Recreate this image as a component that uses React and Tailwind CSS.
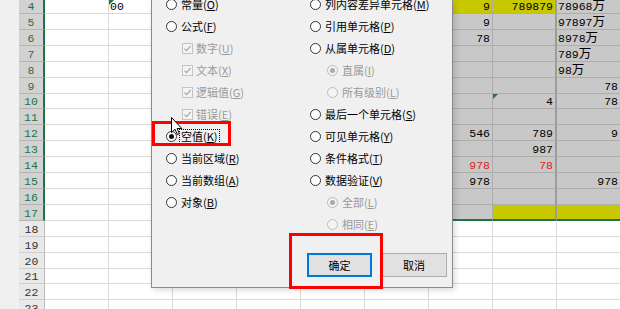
import React from 'react';

// visible rows of the sheet, top of row 4 is cut by the window
const rows = [
  { n: 4, h: 'h-[14px]' },
  { n: 5, h: 'h-[16px]' },
  { n: 6, h: 'h-[16px]' },
  { n: 7, h: 'h-[16px]' },
  { n: 8, h: 'h-[16px]' },
  { n: 9, h: 'h-[16px]' },
  { n: 10, h: 'h-[15px]' },
  { n: 11, h: 'h-[16px]' },
  { n: 12, h: 'h-[16px]' },
  { n: 13, h: 'h-[16px]' },
  { n: 14, h: 'h-[16px]' },
  { n: 15, h: 'h-[16px]' },
  { n: 16, h: 'h-[16px]' },
  { n: 17, h: 'h-[16px]' },
  { n: 18, h: 'h-[16px]' },
  { n: 19, h: 'h-[16px]' },
  { n: 20, h: 'h-[16px]' },
  { n: 21, h: 'h-[15px]' },
  { n: 22, h: 'h-[16px]' },
  { n: 23, h: 'h-[16px]' },
];

const cols = ['a', 'b', 'c', 'd', 'e', 'f', 'g', 'h', 'i'];

const cellData = {
  4: { b: { t: '00', left: true, tri: true }, g: { t: '9' }, h: { t: '789879' }, i: { t: '78968', wan: true, left: true } },
  5: { g: { t: '9' }, i: { t: '97897', wan: true, left: true } },
  6: { g: { t: '78' }, i: { t: '8978', wan: true, left: true } },
  7: { i: { t: '789', wan: true, left: true } },
  8: { i: { t: '98', wan: true, left: true } },
  9: { i: { t: '78' } },
  10: { h: { t: '4', tri: true }, i: { t: '78' } },
  12: { g: { t: '546' }, h: { t: '789' }, i: { t: '9' } },
  13: { h: { t: '987' } },
  14: { g: { t: '978', red: true }, h: { t: '78', red: true } },
  15: { g: { t: '978' }, i: { t: '978' } },
};

const leftItems = [
  { type: 'radio', label: '常量', key: 'O' },
  { type: 'radio', label: '公式', key: 'F' },
  { type: 'check', label: '数字', key: 'U' },
  { type: 'check', label: '文本', key: 'X' },
  { type: 'check', label: '逻辑值', key: 'G' },
  { type: 'check', label: '错误', key: 'E' },
  { type: 'radio', label: '空值', key: 'K', checked: true, focus: true },
  { type: 'radio', label: '当前区域', key: 'R' },
  { type: 'radio', label: '当前数组', key: 'A' },
  { type: 'radio', label: '对象', key: 'B' },
];

const rightItems = [
  { type: 'radio', label: '列内容差异单元格', key: 'M' },
  { type: 'radio', label: '引用单元格', key: 'P' },
  { type: 'radio', label: '从属单元格', key: 'D' },
  { type: 'sub', label: '直属', key: 'I', checked: true },
  { type: 'sub', label: '所有级别', key: 'L' },
  { type: 'radio', label: '最后一个单元格', key: 'S' },
  { type: 'radio', label: '可见单元格', key: 'Y' },
  { type: 'radio', label: '条件格式', key: 'T' },
  { type: 'radio', label: '数据验证', key: 'V' },
  { type: 'sub', label: '全部', key: 'L', checked: true },
  { type: 'sub', label: '相同', key: 'E' },
];

function Cell({ row, col }) {
  const d = (cellData[row] || {})[col];
  const inSel = row <= 17 && (col === 'g' || col === 'h' || col === 'i');
  const yellow = (row === 4 && (col === 'g' || col === 'h')) || (row === 17 && (col === 'h' || col === 'i'));

  let cls = 'relative flex h-full w-[64px] shrink-0 items-end overflow-hidden border-r border-b pb-[1px] ';
  if (yellow) cls += 'bg-[#c8c800] border-[#adadad] ';
  else if (inSel) cls += 'bg-[#c8c8c8] border-[#adadad] ';
  else cls += 'bg-white border-[#dadada] ';
  if (inSel && col === 'h') cls += 'border-r-2 border-r-[#9c9c9c] ';
  if (row === 17 && inSel) cls += 'border-b-2 border-b-[#217346] ';
  if (d && d.left) cls += 'justify-start pl-[1px] ';
  else cls += 'justify-end pr-[2px] ';
  if (col === 'i' && d && !d.left) cls += 'pr-0 ';

  return (
    <div className={cls}>
      {d && d.tri && (
        <span className="absolute left-0 top-0 h-0 w-0 border-t-[5px] border-r-[5px] border-t-[#217346] border-r-transparent" />
      )}
      {d && (
        <span className={d.red ? 'text-[#e02020]' : 'text-black'}>
          {d.t}
          {d.wan && <span className="font-['Noto_Sans_CJK_SC',sans-serif] text-[12.5px]">万</span>}
        </span>
      )}
    </div>
  );
}

function SheetRow({ n, h }) {
  const sel = n <= 17;
  return (
    <div className={`flex shrink-0 ${h}`}>
      <div className="w-[19px] shrink-0 bg-[#f0f0f0]" />
      {sel ? (
        <div className="flex w-[26px] shrink-0 items-end justify-center border-r-2 border-b border-r-[#217346] border-b-[#b4b4b4] bg-[#d2d2d2] pb-[1px] text-[#217346]">
          {n}
        </div>
      ) : (
        <div className="flex w-[26px] shrink-0 items-end justify-center border-r border-b border-r-[#bcbcbc] border-b-[#cfcfcf] bg-[#e9e9e9] pb-[1px] text-[#333]">
          {n}
        </div>
      )}
      {cols.map((c) => (
        <Cell key={c} row={n} col={c} />
      ))}
    </div>
  );
}

function Radio({ checked, disabled }) {
  return (
    <span
      className={`flex size-[11px] shrink-0 items-center justify-center rounded-full border ${
        disabled ? 'border-[#bcbcbc] bg-[#f4f4f4]' : 'border-[#333] bg-white'
      }`}
    >
      {checked && <span className={`size-[5px] rounded-full ${disabled ? 'bg-[#aaaaaa]' : 'bg-[#111]'}`} />}
    </span>
  );
}

function Check() {
  return (
    <span className="flex size-[11px] shrink-0 items-center justify-center border border-[#c4c4c4] bg-[#f4f4f4]">
      <svg width="9" height="9" viewBox="0 0 9 9">
        <path d="M1.5 4.6 L3.6 6.7 L7.6 2" fill="none" stroke="#a8a8a8" strokeWidth="1.2" />
      </svg>
    </span>
  );
}

function Label({ item, disabled }) {
  return (
    <span
      className={`${disabled ? 'text-[#9a9a9a]' : 'text-black'} ${
        item.focus ? 'outline-1 outline-dotted outline-black outline-offset-[1px]' : ''
      }`}
    >
      {item.label}(<span className="underline underline-offset-[1px]">{item.key}</span>)
    </span>
  );
}

function Option({ item }) {
  if (item.type === 'check') {
    return (
      <div className="flex h-[22px] items-center gap-[3px] pl-[16px]">
        <Check />
        <Label item={item} disabled />
      </div>
    );
  }
  if (item.type === 'sub') {
    return (
      <div className="flex h-[22px] items-center gap-[4px] pl-[17px]">
        <Radio checked={item.checked} disabled />
        <Label item={item} disabled />
      </div>
    );
  }
  return (
    <div className="flex h-[22px] items-center gap-[4px]">
      <Radio checked={item.checked} />
      <Label item={item} />
    </div>
  );
}

function GoToSpecial() {
  return (
    <div className="absolute left-[151px] top-0 flex h-[288px] w-[302px] flex-col border-x border-b border-[#8a8a8a] bg-[#f0f0f0] font-['Noto_Sans_CJK_SC','Noto_Sans',sans-serif] text-[11px] leading-none shadow-[2px_2px_6px_rgba(0,0,0,0.15)]">
      <div className="-mt-[7px] grid grid-cols-[144px_1fr] pl-[14px]">
        <div className="flex flex-col">
          {leftItems.map((it) => (
            <Option key={it.label} item={it} />
          ))}
        </div>
        <div className="flex flex-col">
          {rightItems.map((it) => (
            <Option key={it.label} item={it} />
          ))}
        </div>
      </div>
      <div className="mt-[18px] flex justify-end gap-[9px] pr-[5px]">
        <button className="flex h-[24px] w-[65px] items-center justify-center border-2 border-[#0078d7] bg-[#e1e1e1] text-black">
          确定
        </button>
        <button className="flex h-[24px] w-[66px] items-center justify-center border border-[#adadad] bg-[#e1e1e1] text-black">
          取消
        </button>
      </div>
    </div>
  );
}

export default function App() {
  return (
    <div className="relative h-[309px] w-[620px] overflow-hidden bg-white font-['Liberation_Mono','Noto_Sans_CJK_SC',monospace] text-[11.5px] leading-none">
      <div className="flex flex-col">
        {rows.map((r) => (
          <SheetRow key={r.n} n={r.n} h={r.h} />
        ))}
      </div>

      <GoToSpecial />

      {/* red highlight boxes */}
      <div className="absolute left-[152px] top-[121px] h-[25px] w-[79px] border-[3px] border-[#ff0000]" />
      <div className="absolute left-[289px] top-[233px] h-[56px] w-[94px] border-[3px] border-[#ff0000]" />

      {/* mouse pointer */}
      <svg className="absolute left-[171px] top-[117px]" width="12" height="19" viewBox="0 0 12 19">
        <path d="M0.5 0.5 L0.5 15.5 L4 12.2 L6.4 17.6 L8.4 16.7 L6.1 11.5 L10.8 11.5 Z" fill="#fff" stroke="#000" strokeWidth="1" />
      </svg>
    </div>
  );
}
